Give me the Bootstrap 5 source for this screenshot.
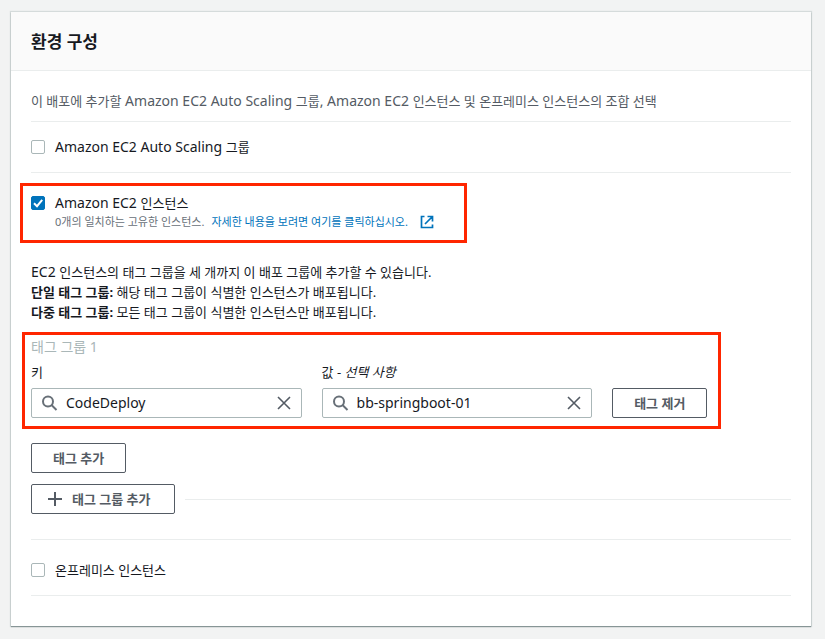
<!DOCTYPE html>
<html lang="ko">
<head>
<meta charset="utf-8">
<meta name="viewport" content="width=device-width, initial-scale=1">
<title>환경 구성</title>
<link href="https://cdn.jsdelivr.net/npm/bootstrap@5.3.0/dist/css/bootstrap.min.css" rel="stylesheet">
<style>
body{background:#f2f3f3;color:#16191f;font:14px/20px "Noto Sans","Noto Sans CJK KR",sans-serif}
.ko{font-size:13px}
.panel{margin:12px 14px 12px 11px;border:0;border-radius:0;background:#fff;box-shadow:0 1px 1px #879596,0 0 1px 1px #d5dbdb}
.panel-head{background:#fafafa;border-bottom:1px solid #eaeded;padding:19px 20px 17px}
.panel-head h1{font-size:17px;line-height:22px;font-weight:700;margin:0}
.panel-main{padding:20px 20px 30px}
.rule{border-top:1px solid #eaeded}
.intro{color:#545b64;padding-bottom:10px}
.choice{padding:15px 0}
.choice-last{padding:20px 0 15px}
.form-check-input.tick{width:14px;height:14px;margin:0;border:1px solid #aab7b8;border-radius:2px;flex:none}
.form-check-input.tick:checked{background-color:#0073bb;border-color:#0073bb;background-size:14px;background-image:url("data:image/svg+xml,%3csvg xmlns='http://www.w3.org/2000/svg' viewBox='0 0 14 14'%3e%3cpath d='M3 7.3 6 10.2 11.2 3.8' fill='none' stroke='%23fff' stroke-width='2'/%3e%3c/svg%3e")}
.tick-line{gap:10px}
.hint{font-size:11px;line-height:16px;color:#687078;padding:1px 0 0 24px;gap:7px}
.hint a{color:#0073bb;text-decoration:none;gap:12px}
.marked{position:relative}
.marked::after{content:"";position:absolute;border:3px solid #ff2600;pointer-events:none}
.mark-choice{width:fit-content}
.mark-choice::after{inset:-10px -33px -13px -11px}
.mark-group::after{inset:-5px -14px -11px -9px}
.notes{padding-top:32px;padding-bottom:15px}
.group-name{font-size:14px;color:#aab7b8;margin:0;font-weight:400;line-height:20px;grid-column:1/-1}
.tag-grid{width:89%;display:grid;grid-template-columns:1fr 1fr auto;gap:5px 20px;align-items:end}
.field label{display:block;margin-bottom:6px;line-height:20px}
.search{border:1px solid #aab7b8;border-radius:2px;height:30px;padding:0 10px}
.search input{border:0;outline:0;flex:1;min-width:0;padding:0;margin:0 9px 0 8px;color:#16191f;background:none;font-size:14px}
.search button{border:0;background:none;padding:0;display:flex}
.act{border:1px solid #545b64;border-radius:2px;color:#545b64;font-weight:700;font-size:13px;line-height:20px;padding:4px 21px;background:#fff}
.act-wide{padding:4px 23px 4px 16px;gap:10px}
.add-tag{padding:25px 0 11px}
.add-group{padding-bottom:25px;gap:10px}
svg{flex:none}
</style>
<script src="https://cdn.jsdelivr.net/npm/bootstrap@5.3.0/dist/js/bootstrap.bundle.min.js"></script>
</head>
<body>
<main class="card panel">
  <header class="panel-head"><h1>환경 구성</h1></header>
  <div class="panel-main">
    <p class="intro mb-0"><span class="ko">이 배포에 추가할</span> Amazon EC2 Auto Scaling <span class="ko">그룹</span>, Amazon EC2 <span class="ko">인스턴스 및 온프레미스 인스턴스의 조합 선택</span></p>
    <div class="rule choice d-flex align-items-center tick-line">
      <input class="form-check-input tick" type="checkbox" id="asg"><label for="asg">Amazon EC2 Auto Scaling <span class="ko">그룹</span></label>
    </div>
    <div class="rule pt-3">
      <div class="marked mark-choice mt-1">
        <div class="d-flex align-items-center tick-line">
          <input class="form-check-input tick" type="checkbox" id="ec2" checked><label for="ec2">Amazon EC2 <span class="ko">인스턴스</span></label>
        </div>
        <div class="hint d-flex align-items-center"><span>0개의 일치하는 고유한 인스턴스.</span><a href="#" class="d-flex align-items-center">자세한 내용을 보려면 여기를 클릭하십시오.
          <svg width="14" height="14" viewBox="0 0 14 14" fill="none" stroke="#0073bb" stroke-width="1.700" aria-hidden="true"><path d="M4.500 1.500h-3v11h11v-3M7.500 1.500h5v5M12.500 1.500 5 9"/></svg></a></div>
      </div>
    </div>
    <div class="notes">
      <div>EC2 <span class="ko">인스턴스의 태그 그룹을 세 개까지 이 배포 그룹에 추가할 수 있습니다.</span></div>
      <div class="ko"><strong>단일 태그 그룹:</strong> 해당 태그 그룹이 식별한 인스턴스가 배포됩니다.</div>
      <div class="ko"><strong>다중 태그 그룹:</strong> 모든 태그 그룹이 식별한 인스턴스만 배포됩니다.</div>
    </div>
    <section class="tag-grid marked mark-group">
      <h2 class="group-name">태그 그룹 1</h2>
      <div class="field">
        <label for="key" class="ko">키</label>
        <div class="search d-flex align-items-center">
          <svg width="16" height="16" viewBox="0 0 16 16" fill="none" stroke="#687078" stroke-width="2" aria-hidden="true"><circle cx="6" cy="6.500" r="5"/><path d="m9.500 10 5 5"/></svg>
          <input id="key" type="text" value="CodeDeploy">
          <button type="button" aria-label="키 지우기"><svg width="14" height="14" viewBox="0 0 14 14" stroke="#545b64" stroke-width="1.600" aria-hidden="true"><path d="m1 1 12 12M13 1 1 13"/></svg></button>
        </div>
      </div>
      <div class="field">
        <label for="val" class="ko">값 - <em>선택 사항</em></label>
        <div class="search d-flex align-items-center">
          <svg width="16" height="16" viewBox="0 0 16 16" fill="none" stroke="#687078" stroke-width="2" aria-hidden="true"><circle cx="6" cy="6.500" r="5"/><path d="m9.500 10 5 5"/></svg>
          <input id="val" type="text" value="bb-springboot-01">
          <button type="button" aria-label="값 지우기"><svg width="14" height="14" viewBox="0 0 14 14" stroke="#545b64" stroke-width="1.600" aria-hidden="true"><path d="m1 1 12 12M13 1 1 13"/></svg></button>
        </div>
      </div>
      <button type="button" class="act">태그 제거</button>
    </section>
    <div class="add-tag"><button type="button" class="act d-block">태그 추가</button></div>
    <div class="add-group d-flex align-items-center">
      <button type="button" class="act act-wide d-flex align-items-center"><svg width="14" height="14" viewBox="0 0 14 14" stroke="#545b64" stroke-width="2" aria-hidden="true"><path d="M7 0v14M0 7h14"/></svg>태그 그룹 추가</button>
      <div class="rule flex-grow-1"></div>
    </div>
    <div class="rule choice-last d-flex align-items-center tick-line">
      <input class="form-check-input tick" type="checkbox" id="onprem"><label for="onprem" class="ko">온프레미스 인스턴스</label>
    </div>
    <div class="rule"></div>
  </div>
</main>
</body>
</html>
